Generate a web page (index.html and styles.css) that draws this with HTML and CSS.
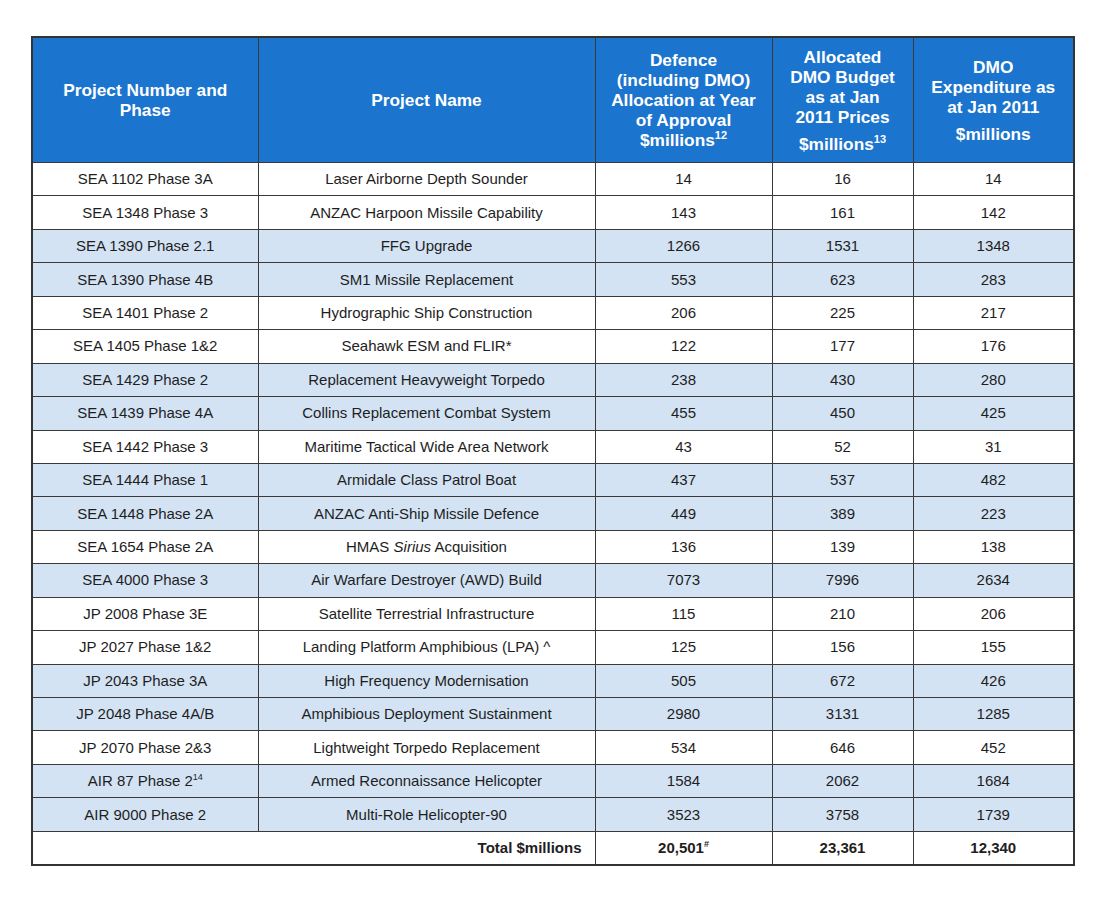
FILE: index.html
```html
<!DOCTYPE html>
<html>
<head>
<meta charset="utf-8">
<link rel="stylesheet" href="styles.css">
</head>
<body>
<table class="grid">
  <colgroup>
    <col class="c1"><col class="c2"><col class="c3"><col class="c4"><col class="c5">
  </colgroup>
  <thead>
    <tr class="head">
      <th>Project Number and<br>Phase</th>
      <th>Project Name</th>
      <th>Defence<br>(including DMO)<br>Allocation at Year<br>of Approval<br>$millions<sup>12</sup></th>
      <th><p>Allocated<br>DMO Budget<br>as at Jan<br>2011 Prices</p><p class="gap">$millions<sup>13</sup></p></th>
      <th><p>DMO<br>Expenditure as<br>at Jan 2011</p><p class="gap">$millions</p></th>
    </tr>
  </thead>
  <tbody>
    <tr><td>SEA 1102 Phase 3A</td><td>Laser Airborne Depth Sounder</td><td>14</td><td>16</td><td>14</td></tr>
    <tr><td>SEA 1348 Phase 3</td><td>ANZAC Harpoon Missile Capability</td><td>143</td><td>161</td><td>142</td></tr>
    <tr class="alt"><td>SEA 1390 Phase 2.1</td><td>FFG Upgrade</td><td>1266</td><td>1531</td><td>1348</td></tr>
    <tr class="alt"><td>SEA 1390 Phase 4B</td><td>SM1 Missile Replacement</td><td>553</td><td>623</td><td>283</td></tr>
    <tr><td>SEA 1401 Phase 2</td><td>Hydrographic Ship Construction</td><td>206</td><td>225</td><td>217</td></tr>
    <tr><td>SEA 1405 Phase 1&amp;2</td><td>Seahawk ESM and FLIR*</td><td>122</td><td>177</td><td>176</td></tr>
    <tr class="alt"><td>SEA 1429 Phase 2</td><td>Replacement Heavyweight Torpedo</td><td>238</td><td>430</td><td>280</td></tr>
    <tr class="alt"><td>SEA 1439 Phase 4A</td><td>Collins Replacement Combat System</td><td>455</td><td>450</td><td>425</td></tr>
    <tr><td>SEA 1442 Phase 3</td><td>Maritime Tactical Wide Area Network</td><td>43</td><td>52</td><td>31</td></tr>
    <tr class="alt"><td>SEA 1444 Phase 1</td><td>Armidale Class Patrol Boat</td><td>437</td><td>537</td><td>482</td></tr>
    <tr class="alt"><td>SEA 1448 Phase 2A</td><td>ANZAC Anti-Ship Missile Defence</td><td>449</td><td>389</td><td>223</td></tr>
    <tr><td>SEA 1654 Phase 2A</td><td>HMAS <em>Sirius</em> Acquisition</td><td>136</td><td>139</td><td>138</td></tr>
    <tr class="alt"><td>SEA 4000 Phase 3</td><td>Air Warfare Destroyer (AWD) Build</td><td>7073</td><td>7996</td><td>2634</td></tr>
    <tr><td>JP 2008 Phase 3E</td><td>Satellite Terrestrial Infrastructure</td><td>115</td><td>210</td><td>206</td></tr>
    <tr><td>JP 2027 Phase 1&amp;2</td><td>Landing Platform Amphibious (LPA) ^</td><td>125</td><td>156</td><td>155</td></tr>
    <tr class="alt"><td>JP 2043 Phase 3A</td><td>High Frequency Modernisation</td><td>505</td><td>672</td><td>426</td></tr>
    <tr class="alt"><td>JP 2048 Phase 4A/B</td><td>Amphibious Deployment Sustainment</td><td>2980</td><td>3131</td><td>1285</td></tr>
    <tr><td>JP 2070 Phase 2&amp;3</td><td>Lightweight Torpedo Replacement</td><td>534</td><td>646</td><td>452</td></tr>
    <tr class="alt"><td>AIR 87 Phase 2<sup class="small">14</sup></td><td>Armed Reconnaissance Helicopter</td><td>1584</td><td>2062</td><td>1684</td></tr>
    <tr class="alt"><td>AIR 9000 Phase 2</td><td>Multi-Role Helicopter-90</td><td>3523</td><td>3758</td><td>1739</td></tr>
    <tr class="total"><td colspan="2" class="label">Total $millions</td><td>20,501<sup class="small">#</sup></td><td>23,361</td><td>12,340</td></tr>
  </tbody>
</table>
</body>
</html>
```

FILE: styles.css
```css
html, body {
  margin: 0;
  padding: 0;
  background: #ffffff;
}

body {
  font-family: "Liberation Sans", Arial, sans-serif;
  color: #1e1e1e;
}

.grid {
  margin: 36px 0 0 31px;
  border-collapse: collapse;
  table-layout: fixed;
  width: 1042px;
  border: 2px solid #333333;
}

.c1 { width: 226px; }
.c2 { width: 337px; }
.c3 { width: 177px; }
.c4 { width: 141px; }
.c5 { width: 161px; }

.grid th,
.grid td {
  border: 1px solid #3a3a3a;
  padding: 0;
  text-align: center;
  vertical-align: middle;
}

.head th {
  height: 124px;
  background: #1b74cd;
  color: #ffffff;
  font-weight: bold;
  font-size: 17.3px;
  line-height: 20px;
}

.head p {
  margin: 0;
}

.head p.gap {
  margin-top: 7px;
}

sup {
  font-size: 11px;
  line-height: 0;
  vertical-align: 7px;
}

sup.small {
  font-size: 9px;
  vertical-align: 6px;
}

.grid td {
  height: 32.45px;
  font-size: 15px;
  line-height: 18px;
}

.alt td {
  background: #d3e3f4;
}

.total td {
  font-weight: bold;
}

.total td.label {
  text-align: right;
  padding-right: 13px;
}
```
